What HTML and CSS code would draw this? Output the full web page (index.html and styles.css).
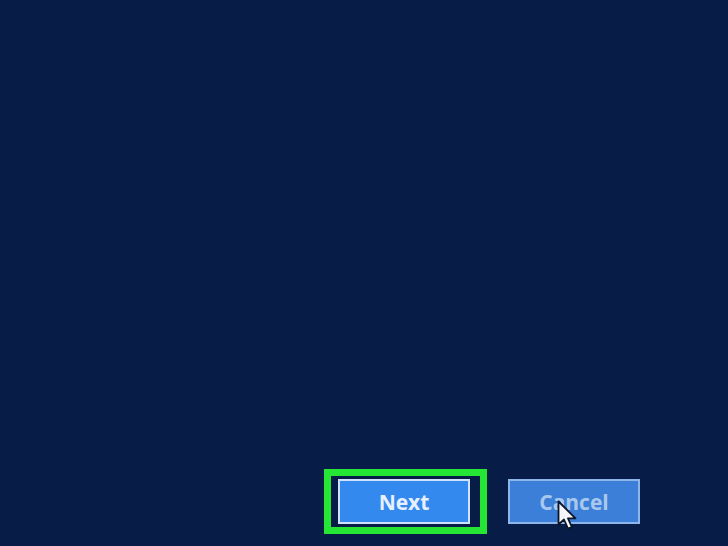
FILE: index.html
```html
<!DOCTYPE html>
<html>
<head>
<meta charset="utf-8">
<link rel="stylesheet" href="styles.css">
</head>
<body>
<div class="screen">
  <div class="spacer"></div>
  <div class="actions">
    <div class="highlight">
      <button class="btn btn-next">Next</button>
    </div>
    <div class="cancel-wrap">
      <button class="btn btn-cancel">Cancel</button>
      <svg class="cursor" width="22" height="32" viewBox="0 0 22 32">
        <path d="M1.5 1.5 L1.5 24.5 L7 19.5 L11 28.5 L14.8 27 L11 18.3 L18.5 18.3 Z" fill="#f4f6fa" stroke="#0d1526" stroke-width="1.8" stroke-linejoin="round"/>
      </svg>
    </div>
  </div>
</div>
</body>
</html>
```
FILE: styles.css
```css
html, body {
  margin: 0;
  padding: 0;
  background: #081c48;
}
.screen {
  width: 728px;
  height: 546px;
  display: flex;
  flex-direction: column;
  background: #081c48;
}
.spacer {
  flex: 1;
}
.actions {
  display: flex;
  align-items: center;
  padding: 0 88px 12px 324px;
  gap: 21px;
}
.highlight {
  border: 7px solid #26e635;
  padding: 3px 10px 3px 7px;
}
.cancel-wrap {
  position: relative;
}
.btn {
  display: block;
  width: 132px;
  height: 45px;
  box-sizing: border-box;
  font-family: "Open Sans", "Noto Sans", sans-serif;
  font-weight: 700;
  font-size: 21px;
  line-height: 1;
  padding: 2px 0 0 0;
  margin: 0;
  cursor: default;
}
.btn-next {
  background: #3489ef;
  border: 2px solid #cfe3ff;
  color: #e6f0ff;
}
.btn-cancel {
  background: #3b7fd8;
  border: 2px solid #8fb6ea;
  color: #a9c8ee;
}
.cursor {
  position: absolute;
  left: 49px;
  top: 21px;
}
```
